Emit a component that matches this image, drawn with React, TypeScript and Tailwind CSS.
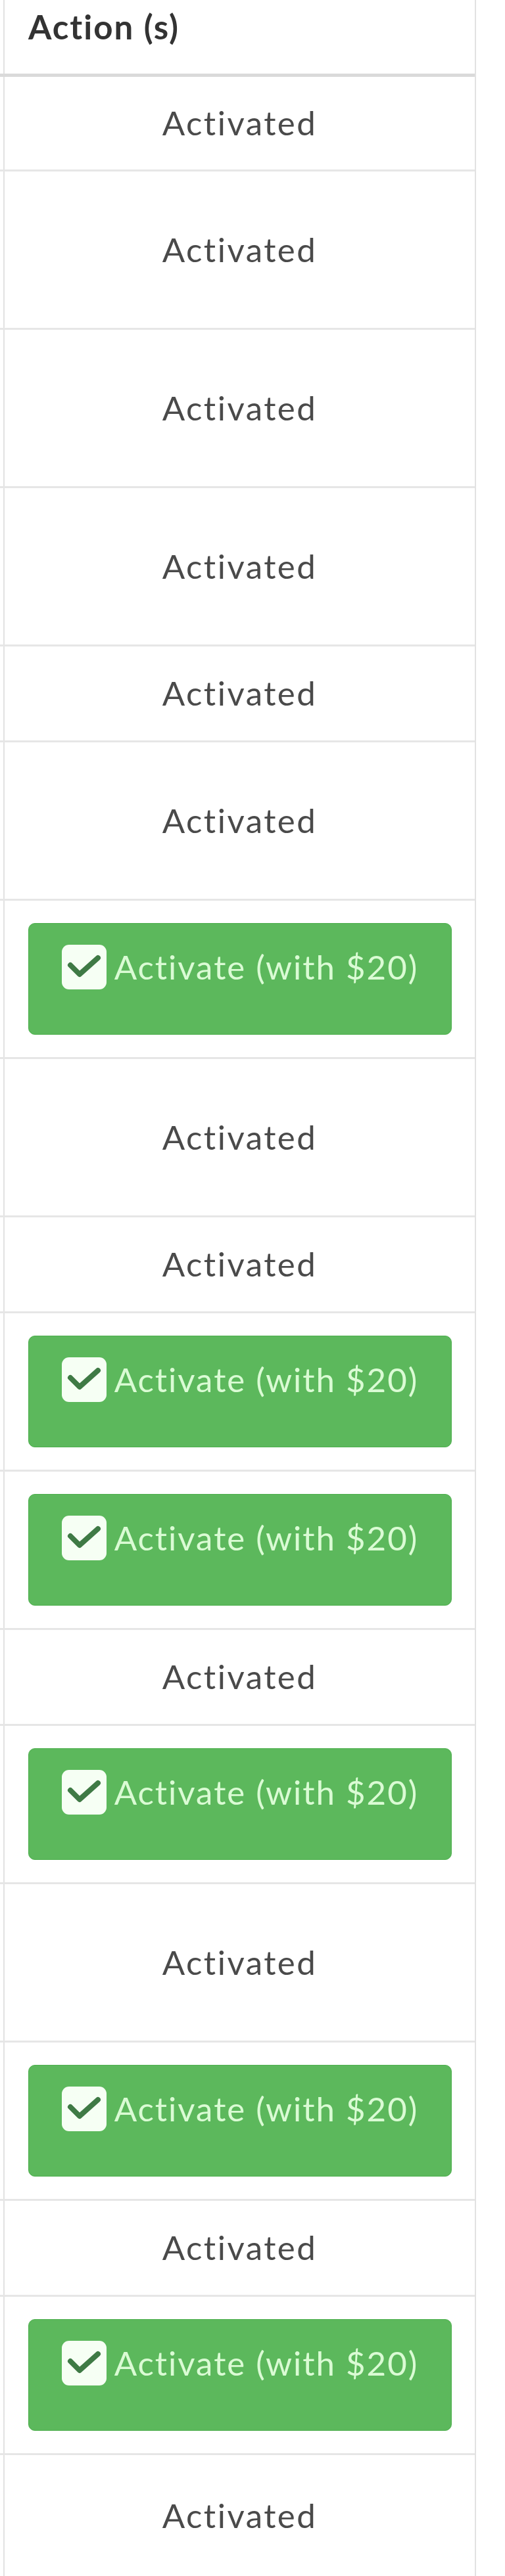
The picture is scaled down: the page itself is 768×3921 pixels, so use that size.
import React from 'react';

type RowKind = 'first' | 'short' | 'tall' | 'last';

interface Row {
  kind: RowKind;
  action: 'activated' | 'activate';
}

const rows: Row[] = [
  { kind: 'first', action: 'activated' },
  { kind: 'tall', action: 'activated' },
  { kind: 'tall', action: 'activated' },
  { kind: 'tall', action: 'activated' },
  { kind: 'short', action: 'activated' },
  { kind: 'tall', action: 'activated' },
  { kind: 'tall', action: 'activate' },
  { kind: 'tall', action: 'activated' },
  { kind: 'short', action: 'activated' },
  { kind: 'tall', action: 'activate' },
  { kind: 'tall', action: 'activate' },
  { kind: 'short', action: 'activated' },
  { kind: 'tall', action: 'activate' },
  { kind: 'tall', action: 'activated' },
  { kind: 'tall', action: 'activate' },
  { kind: 'short', action: 'activated' },
  { kind: 'tall', action: 'activate' },
  { kind: 'last', action: 'activated' },
];

const rowHeight: Record<RowKind, string> = {
  first: 'h-[144px] border-b-[3px]',
  short: 'h-[146px] border-b-[3px]',
  tall: 'h-[241px] border-b-[3px]',
  last: 'h-[184px]',
};

function CheckSquare() {
  return (
    <svg width="68" height="68" viewBox="0 0 68 68" fill="none" className="shrink-0">
      <rect x="0" y="0" width="68" height="68" rx="11" fill="#f6fff4" />
      <path d="M13 31 L27 45 L55 20" stroke="#3f7a45" strokeWidth="8" strokeLinecap="round" strokeLinejoin="round" />
    </svg>
  );
}

function ActivateButton() {
  return (
    <button className="w-full h-[170px] flex items-start justify-center gap-3 pt-[32px] bg-[#5cb85c] border border-[#4cae4c] rounded-[10px] text-[#dafbd4] text-[51px] leading-[68px] tracking-[2px]">
      <CheckSquare />
      <span>Activate (with $20)</span>
    </button>
  );
}

export default function App() {
  return (
    <div className="w-[768px] min-h-screen bg-white font-['Lato','Liberation_Sans',sans-serif]">
      <div className="w-[724px] border-r-2 border-[#e2e2e2]">
        {/* header */}
        <div className="h-[117px] border-b-[5px] border-[#dadada] pl-[5px]">
          <div className="h-full border-l-2 border-[#e2e2e2] pl-[36px] pt-[10px] text-[51px] leading-[61px] font-bold tracking-[2px] text-[#333]">
            Action (s)
          </div>
        </div>

        {rows.map((row, i) => (
          <div key={i} className={`${rowHeight[row.kind]} border-[#e6e6e6] pl-[5px]`}>
            {row.action === 'activated' ? (
              <div className="h-full border-l-2 border-[#e2e2e2] flex items-center justify-center text-[51px] tracking-[2.5px] text-[#4a4a4a]">
                Activated
              </div>
            ) : (
              <div className="h-full border-l-2 border-[#e2e2e2] flex items-center pl-[36px] pr-[35px]">
                <ActivateButton />
              </div>
            )}
          </div>
        ))}
      </div>
    </div>
  );
}
